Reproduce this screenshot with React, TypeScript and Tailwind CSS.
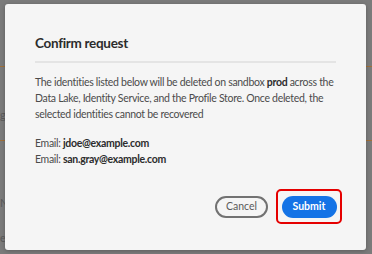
export default function App() {
  return (
    <div className="relative w-[372px] h-[254px] overflow-hidden bg-[#7b7b7b] font-['Lato',sans-serif]">
      {/* dimmed page behind the modal */}
      <div className="absolute inset-0">
        <div className="mt-[66px] h-px bg-[#a0703a]" />
        <div className="mt-[42px] text-[11px] text-[#5a5a5a] leading-none">g</div>
        <div className="mt-[20px] h-px bg-[#a0703a]" />
        <div className="mt-[56px] text-[11px] text-[#5a5a5a] leading-none">N</div>
        <div className="mt-[24px] text-[11px] text-[#5a5a5a] leading-none">e</div>
      </div>

      {/* modal */}
      <div className="absolute left-[5px] top-[4px] w-[361px] h-[246px] bg-[#f5f5f5] rounded-[3px] shadow-[0_1px_4px_rgba(0,0,0,0.25)] flex flex-col px-[30px] pt-[29px]">
        <h2 className="text-[13.5px] font-bold text-[#2c2c2c] leading-[20px] tracking-[-0.3px]">Confirm request</h2>
        <div className="mt-[8px] h-[2px] bg-[#e4e4e4]" />
        <p className="mt-[11px] text-[10.5px] leading-[16px] text-[#4b4b4b] tracking-[-0.3px]">
          The identities listed below will be deleted on sandbox <span className="font-bold text-[#2c2c2c]">prod</span> across the Data Lake, Identity Service, and the Profile Store. Once deleted, the selected identities cannot be recovered
        </p>
        <div className="mt-[13px] flex flex-col text-[10.5px] leading-[16px] text-[#4b4b4b] tracking-[-0.3px]">
          <div>
            Email: <span className="font-bold text-[#2c2c2c]">jdoe@example.com</span>
          </div>
          <div>
            Email: <span className="font-bold text-[#2c2c2c]">san.gray@example.com</span>
          </div>
        </div>
        <div className="mt-[22px] flex items-center justify-end gap-[8px]">
          <button className="h-[22px] w-[53px] rounded-full border-2 border-[#727272] text-[10.5px] text-[#5a5a5a] leading-none">
            Cancel
          </button>
          <div className="rounded-[5px] border-[2.5px] border-[#e50000] px-[3.5px] py-[4.5px] -mr-[6px]">
            <button className="block h-[22px] w-[55px] rounded-full bg-[#1473e6] text-[10.5px] font-bold text-white leading-none">
              Submit
            </button>
          </div>
        </div>
      </div>
    </div>
  );
}
